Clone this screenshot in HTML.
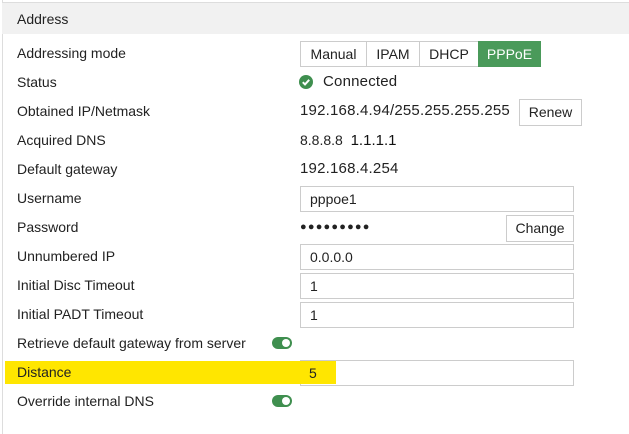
<!DOCTYPE html>
<html><head><style>
body{margin:0;width:629px;height:434px;background:#fff;font-family:"Liberation Sans",sans-serif;font-size:14px;color:#222;position:relative;overflow:hidden}
.a{position:absolute}
.hdr{left:2px;top:2px;width:627px;height:31px;background:#f1f1f1;border-top:1px solid #ddd}
.vl{left:2px;top:0;width:1px;height:434px;background:#ddd}
.lbl{left:17px;line-height:20px}
.inp{left:300px;width:272px;height:24px;border:1px solid #ccc;background:#fff;box-sizing:content-box}
.inp span{position:absolute;left:9px;top:3px;line-height:18px}
.btn{border:1px solid #ccc;background:#fff;text-align:center;line-height:24px}
.tg{width:20px;height:12px;border-radius:6px;background:#3f8f4f}
.tg:after{content:"";position:absolute;right:2px;top:2px;width:8px;height:8px;border-radius:50%;background:#fff}
.v{font-size:15px;letter-spacing:0.2px}
</style></head><body>
<div class="a vl"></div>
<div class="a hdr"><span class="a" style="left:15px;top:6px;line-height:20px">Address</span></div>

<div class="a lbl" style="top:43px">Addressing mode</div>
<div class="a btn" style="left:300px;top:41px;width:65px;height:24px">Manual</div>
<div class="a btn" style="left:366px;top:41px;width:52px;height:24px">IPAM</div>
<div class="a btn" style="left:419px;top:41px;width:58px;height:24px">DHCP</div>
<div class="a btn" style="left:478px;top:41px;width:61px;height:24px;background:#4a9a5a;border-color:#4a9a5a;color:#fff">PPPoE</div>

<div class="a lbl" style="top:72px">Status</div>
<svg class="a" style="left:299px;top:75px" width="14" height="14" viewBox="0 0 14 14"><circle cx="7" cy="7" r="7" fill="#3f8f4f"/><path d="M3.8 7.2 L6 9.4 L10.2 4.8" stroke="#fff" stroke-width="2" fill="none"/></svg>
<div class="a v" style="left:323px;top:72px;line-height:20px">Connected</div>

<div class="a lbl" style="top:101px">Obtained IP/Netmask</div>
<div class="a v" style="left:300px;top:101px;line-height:20px">192.168.4.94/255.255.255.255</div>
<div class="a btn" style="left:519px;top:99px;width:61px;height:25px">Renew</div>

<div class="a lbl" style="top:130px">Acquired DNS</div>
<div class="a" style="left:300px;top:130px;line-height:20px">8.8.8.8 &nbsp;<span style="color:#111;font-size:15px">1.1.1.1</span></div>

<div class="a lbl" style="top:159px">Default gateway</div>
<div class="a v" style="left:300px;top:159px;line-height:20px">192.168.4.254</div>

<div class="a lbl" style="top:188px">Username</div>
<div class="a inp" style="top:186px"><span>pppoe1</span></div>

<div class="a lbl" style="top:217px">Password</div>
<div class="a" style="left:300px;top:217px;line-height:20px;letter-spacing:1.2px;font-size:11px">●●●●●●●●●</div>
<div class="a btn" style="left:506px;top:215px;width:66px;height:25px">Change</div>

<div class="a lbl" style="top:246px">Unnumbered IP</div>
<div class="a inp" style="top:244px"><span>0.0.0.0</span></div>

<div class="a lbl" style="top:275px">Initial Disc Timeout</div>
<div class="a inp" style="top:273px"><span>1</span></div>

<div class="a lbl" style="top:304px">Initial PADT Timeout</div>
<div class="a inp" style="top:302px"><span>1</span></div>

<div class="a lbl" style="top:333px">Retrieve default gateway from server</div>
<div class="a tg" style="left:272px;top:337px"></div>

<div class="a inp" style="top:360px"></div>
<div class="a" style="left:5px;top:361px;width:331px;height:23px;background:#ffe600"></div>
<div class="a lbl" style="top:362px">Distance</div>
<div class="a" style="left:309px;top:363px;line-height:20px">5</div>

<div class="a lbl" style="top:391px">Override internal DNS</div>
<div class="a tg" style="left:272px;top:395px"></div>
</body></html>
